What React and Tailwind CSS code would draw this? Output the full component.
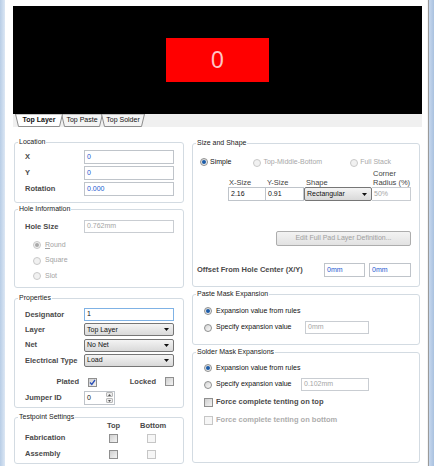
import React from 'react';

const FONT = "font-['Liberation_Sans',Arial,sans-serif]";

function Group({ title, className = '', children }) {
  return (
    <div className={`relative rounded-[3px] border border-[#d3dbe2] ${className}`}>
      <span className="absolute -top-[6px] left-[3px] bg-white px-[1px] text-[7px] leading-[10px] text-[#222]">
        {title}
      </span>
      {children}
    </div>
  );
}

function Radio({ checked = false, disabled = false }) {
  return (
    <span
      className={`inline-flex h-[8px] w-[8px] shrink-0 items-center justify-center rounded-full border ${
        disabled ? 'border-[#c9c9c9] bg-[#f1f1f1]' : 'border-[#8e8f8f] bg-linear-to-br from-[#d4d4d4] to-[#fbfbfb]'
      }`}
    >
      {checked && (
        <span className={`h-[4px] w-[4px] rounded-full ${disabled ? 'bg-[#a9a9a9]' : 'bg-[#1b5ba8]'}`} />
      )}
    </span>
  );
}

function Check({ checked = false, disabled = false }) {
  return (
    <span
      className={`relative inline-flex h-[9px] w-[9px] shrink-0 items-center justify-center border ${
        disabled ? 'border-[#c6c6c6] bg-[#f6f6f6]' : 'border-[#8f8f8f] bg-linear-to-br from-[#cfcfcf] to-[#f3f3f3]'
      }`}
    >
      {checked && (
        <svg width="7" height="7" viewBox="0 0 7 7">
          <path d="M1 3.5 L2.8 5.5 L6 1" fill="none" stroke="#2a4fb8" strokeWidth="1.3" />
        </svg>
      )}
    </span>
  );
}

function Field({ value, className = '', tone = 'black', focus = false }) {
  const color =
    tone === 'blue' ? 'text-[#2458d0]' : tone === 'gray' ? 'text-[#a5a5a5]' : 'text-[#111]';
  const border = focus ? 'border-[#7fb2e5]' : tone === 'gray' ? 'border-[#c9cdd2]' : 'border-[#bfc4ca]';
  return (
    <div className={`flex items-center border bg-white pl-[2px] text-[7px] ${border} ${color} ${className}`}>
      {value}
    </div>
  );
}

function Arrow() {
  return (
    <svg width="5" height="3" viewBox="0 0 5 3" className="shrink-0">
      <path d="M0 0 H5 L2.5 3 Z" fill="#111" />
    </svg>
  );
}

function Select({ value, className = '' }) {
  return (
    <div
      className={`flex items-center justify-between rounded-[2px] border border-[#767676] bg-linear-to-b from-[#f4f4f4] to-[#d9d9d9] pl-[2px] pr-[4px] text-[7px] text-[#111] ${className}`}
    >
      <span>{value}</span>
      <Arrow />
    </div>
  );
}

function Label({ children, className = '' }) {
  return <span className={`text-[7.5px] font-bold text-[#4a4a4a] ${className}`}>{children}</span>;
}

function Tab({ label, active, width, className = '' }) {
  return (
    <div className={`relative flex h-[13px] items-center justify-center ${active ? 'z-10' : ''} ${className}`} style={{ width }}>
      <svg className="absolute inset-0" width={width} height="13" viewBox={`0 0 ${width} 13`}>
        <polygon
          points={`0.5,0 ${width - 0.5},0 ${width - 3.5},12.5 3.5,12.5`}
          fill={active ? '#ffffff' : '#f4f4f4'}
          stroke="#8d8d8d"
          strokeWidth="1"
        />
      </svg>
      <span className={`relative text-[7px] text-[#111] ${active ? 'font-bold' : ''}`}>{label}</span>
    </div>
  );
}

export default function App() {
  return (
    <div className={`flex h-[466px] w-[434px] overflow-hidden bg-white ${FONT}`}>
      <div className="w-[5px] bg-linear-to-r from-[#b8cde6] to-[#dce7f4]" />

      <div className="flex w-[422px] flex-col pt-[6px]">
        {/* preview */}
        <div className="ml-[8px] flex h-[108px] w-[409px] items-center justify-center bg-black">
          <div className="flex h-[44px] w-[103px] items-center justify-center bg-[#ff0000] text-[23px] font-light leading-none text-[#ffc4c4]">
            0
          </div>
        </div>

        {/* layer tabs */}
        <div className="ml-[8px] flex h-[13px] w-[409px] bg-[#f0f0f0] pl-[2px]">
          <Tab label="Top Layer" active width={48} />
          <Tab label="Top Paste" width={42} className="-ml-[2px]" />
          <Tab label="Top Solder" width={44} className="-ml-[2px]" />
        </div>

        <div className="ml-[9px] mt-[15px] flex gap-[8px]">
          {/* left column */}
          <div className="flex w-[170px] flex-col">
            <Group title="Location" className="h-[61px]">
              <div className="flex flex-col gap-[2px] pl-[10px] pt-[7px]">
                {[
                  ['X', '0'],
                  ['Y', '0'],
                  ['Rotation', '0.000'],
                ].map(([l, v]) => (
                  <div key={l} className="flex h-[14px] items-center">
                    <Label className="w-[59px]">{l}</Label>
                    <Field value={v} tone="blue" className="h-[14px] w-[90px]" />
                  </div>
                ))}
              </div>
            </Group>

            <Group title="Hole Information" className="mt-[6px] h-[79px]">
              <div className="flex flex-col pl-[10px] pt-[10px]">
                <div className="flex h-[13px] items-center">
                  <Label className="w-[59px]">Hole Size</Label>
                  <Field value="0.762mm" tone="gray" className="h-[13px] w-[90px]" />
                </div>
                <div className="ml-[8px] mt-[6px] flex flex-col gap-[3.5px]">
                  {[
                    [<><span className="underline">R</span>ound</>, true],
                    ['Square', false],
                    ['Slot', false],
                  ].map(([l, c], i) => (
                    <div key={i} className="flex h-[12px] items-center gap-[4px]">
                      <Radio checked={c} disabled />
                      <span className="text-[7px] text-[#a3a3a3]">{l}</span>
                    </div>
                  ))}
                </div>
              </div>
            </Group>

            <Group title="Properties" className="mt-[10px] h-[110px]">
              <div className="flex flex-col pl-[10px] pt-[9px]">
                <div className="flex flex-col gap-[2.3px]">
                  <div className="flex h-[13px] items-center">
                    <Label className="w-[59px]">Designator</Label>
                    <Field value="1" focus className="h-[13px] w-[90px]" />
                  </div>
                  <div className="flex h-[13px] items-center">
                    <Label className="w-[59px]">Layer</Label>
                    <Select value="Top Layer" className="h-[13px] w-[90px]" />
                  </div>
                  <div className="flex h-[13px] items-center">
                    <Label className="w-[59px]">Net</Label>
                    <Select value="No Net" className="h-[13px] w-[90px]" />
                  </div>
                  <div className="flex h-[13px] items-center">
                    <Label className="w-[59px]">Electrical Type</Label>
                    <Select value="Load" className="h-[13px] w-[90px]" />
                  </div>
                </div>
                <div className="mt-[8px] flex h-[13px] w-[149px] items-center">
                  <Label className="w-[59px] pr-[5px] text-right">Plated</Label>
                  <span className="ml-[4px]">
                    <Check checked />
                  </span>
                  <Label className="ml-auto">Locked</Label>
                  <span className="ml-[9px]">
                    <Check />
                  </span>
                </div>
                <div className="mt-[3px] flex h-[14px] items-center">
                  <Label className="w-[59px]">Jumper ID</Label>
                  <div className="flex h-[14px] w-[31px] items-center justify-between border border-[#bfc4ca] bg-white pl-[2px] pr-[1px] text-[7px] text-[#111]">
                    <span>0</span>
                    <div className="flex h-[11px] w-[7px] flex-col gap-[1px]">
                      <div className="flex flex-1 items-center justify-center rounded-[1px] border border-[#b8b8b8] bg-[#ececec]">
                        <svg width="3" height="2" viewBox="0 0 3 2"><path d="M0 2 L1.5 0 L3 2 Z" fill="#555" /></svg>
                      </div>
                      <div className="flex flex-1 items-center justify-center rounded-[1px] border border-[#b8b8b8] bg-[#ececec]">
                        <svg width="3" height="2" viewBox="0 0 3 2"><path d="M0 0 H3 L1.5 2 Z" fill="#555" /></svg>
                      </div>
                    </div>
                  </div>
                </div>
              </div>
            </Group>

            <Group title="Testpoint Settings" className="mt-[9px] h-[47px]">
              <div className="flex flex-col pl-[10px] pt-[3px]">
                <div className="flex h-[10px] items-center">
                  <span className="w-[77px]" />
                  <Label className="w-[23px] text-center">Top</Label>
                  <Label className="ml-[15px] w-[23px] text-center">Bottom</Label>
                </div>
                <div className="mt-[2px] flex flex-col gap-[6px]">
                  {['Fabrication', 'Assembly'].map((l) => (
                    <div key={l} className="flex h-[10px] items-center">
                      <Label className="w-[77px]">{l}</Label>
                      <span className="flex w-[23px] justify-center">
                        <Check />
                      </span>
                      <span className="ml-[15px] flex w-[23px] justify-center">
                        <Check disabled />
                      </span>
                    </div>
                  ))}
                </div>
              </div>
            </Group>
          </div>

          {/* right column */}
          <div className="mt-[1px] flex w-[228px] flex-col">
            <Group title="Size and Shape" className="h-[144px]">
              <div className="flex flex-col pt-[13px]">
                <div className="flex h-[10px] items-center pl-[7px]">
                  <Radio checked />
                  <span className="ml-[2px] text-[7px] text-[#111]">Simple</span>
                  <span className="ml-[22px]">
                    <Radio disabled />
                  </span>
                  <span className="ml-[2px] text-[7px] text-[#a8a8a8]">Top-Middle-Bottom</span>
                  <span className="ml-[28px]">
                    <Radio disabled />
                  </span>
                  <span className="ml-[2px] text-[7px] text-[#a8a8a8]">Full Stack</span>
                </div>
                <div className="ml-[35px] mt-[2px] flex h-[18px] items-end text-[7.5px] leading-[9px] text-[#444]">
                  <span className="w-[38px] pl-[1px]">X-Size</span>
                  <span className="w-[38px] pl-[1px]">Y-Size</span>
                  <span className="w-[68px] pl-[2px]">Shape</span>
                  <span className="w-[40px] pl-[1px]">
                    Corner
                    <br />
                    Radius (%)
                  </span>
                </div>
                <div className="ml-[35px] flex h-[14px]">
                  <Field value="2.16" className="h-[14px] w-[38px]" />
                  <Field value="0.91" className="h-[14px] w-[38px] border-l-0" />
                  <Select value="Rectangular" className="h-[14px] w-[68px]" />
                  <Field value="50%" tone="gray" className="h-[14px] w-[39px] border-l-0" />
                </div>
                <div className="ml-[83px] mt-[30px] flex h-[15px] w-[135px] items-center justify-center rounded-[2px] border border-[#adadad] bg-linear-to-b from-[#f3f3f3] to-[#e2e2e2] text-[7px] text-[#a0a0a0]">
                  Edit Full Pad Layer Definition...
                </div>
                <div className="mt-[17px] flex h-[14px] items-center pl-[4px]">
                  <Label className="w-[127px]">Offset From Hole Center (X/Y)</Label>
                  <Field value="0mm" tone="blue" className="h-[14px] w-[41px]" />
                  <Field value="0mm" tone="blue" className="ml-[4px] h-[14px] w-[42px]" />
                </div>
              </div>
            </Group>

            <Group title="Paste Mask Expansion" className="mt-[7px] h-[51px]">
              <div className="flex flex-col pl-[11px] pt-[11px]">
                <div className="flex h-[10px] items-center gap-[4px]">
                  <Radio checked />
                  <span className="text-[7px] text-[#111]">Expansion value from rules</span>
                </div>
                <div className="mt-[5px] flex h-[13px] items-center">
                  <Radio />
                  <span className="ml-[4px] w-[89px] text-[7px] text-[#111]">Specify expansion value</span>
                  <Field value="0mm" tone="gray" className="h-[13px] w-[64px]" />
                </div>
              </div>
            </Group>

            <Group title="Solder Mask Expansions" className="mt-[7px] h-[111px]">
              <div className="flex flex-col pl-[11px] pt-[10px]">
                <div className="flex h-[10px] items-center gap-[4px]">
                  <Radio checked />
                  <span className="text-[7px] text-[#111]">Expansion value from rules</span>
                </div>
                <div className="mt-[5px] flex h-[13px] items-center">
                  <Radio />
                  <span className="ml-[4px] w-[85px] text-[7px] text-[#111]">Specify expansion value</span>
                  <Field value="0.102mm" tone="gray" className="h-[13px] w-[68px]" />
                </div>
                <div className="mt-[6px] flex h-[10px] items-center gap-[3px]">
                  <Check />
                  <Label>Force complete tenting on top</Label>
                </div>
                <div className="mt-[8px] flex h-[10px] items-center gap-[3px]">
                  <Check disabled />
                  <Label className="text-[#adadad]">Force complete tenting on bottom</Label>
                </div>
              </div>
            </Group>
          </div>
        </div>
      </div>

      <div className="w-[1px] bg-[#f4f4f4]" />
      <div className="w-[1px] bg-[#9a9a9a]" />
      <div className="w-[5px] bg-linear-to-r from-[#c7d8ee] to-[#a9c1df]" />
    </div>
  );
}
